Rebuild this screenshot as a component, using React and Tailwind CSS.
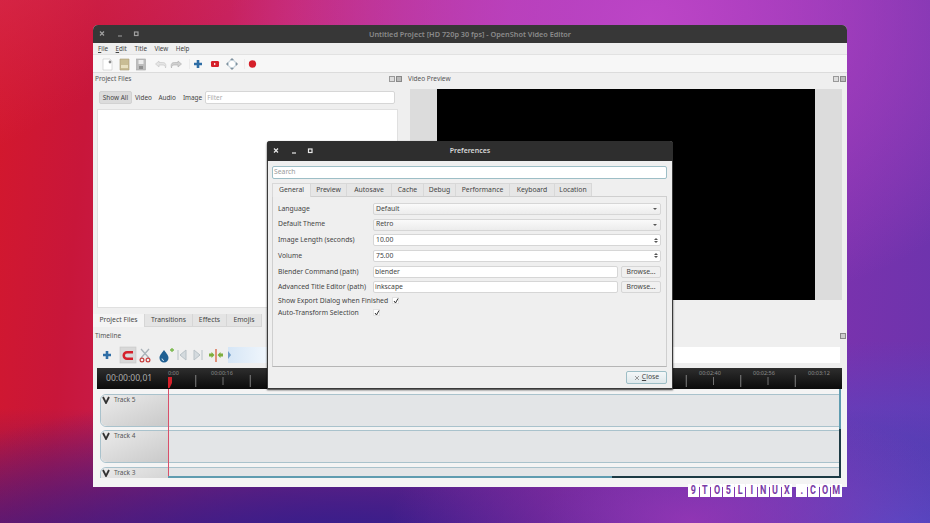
import React from 'react';

const FONT = "font-['Noto_Sans','Open_Sans',sans-serif]";

const PREF_TABS = [
  { label: 'General', w: 'w-[39px]', active: true },
  { label: 'Preview', w: 'w-[36px]' },
  { label: 'Autosave', w: 'w-[45px]' },
  { label: 'Cache', w: 'w-[32px]' },
  { label: 'Debug', w: 'w-[32px]' },
  { label: 'Performance', w: 'w-[54px]' },
  { label: 'Keyboard', w: 'w-[45px]' },
  { label: 'Location', w: 'w-[37px]' },
];

const BOTTOM_TABS = [
  { label: 'Project Files', w: 'w-[52px]', active: true },
  { label: 'Transitions', w: 'w-[48px]' },
  { label: 'Effects', w: 'w-[34px]' },
  { label: 'Emojis', w: 'w-[35px]' },
];

const WATERMARK = ['9', 'T', 'O', '5', 'L', 'I', 'N', 'U', 'X', '.', 'C', 'O', 'M'];

// Window buttons, the same three in both title bars
function WindowButtons({ color }) {
  return (
    <svg width="48" height="8" viewBox="0 0 48 8" fill="none" stroke={color} strokeWidth="1.2">
      <path d="M1 1.5l4 4M5 1.5l-4 4" />
      <path d="M19 6h4" />
      <rect x="35.5" y="2" width="3.5" height="3.5" />
    </svg>
  );
}

function DockButtons() {
  return (
    <div className="flex gap-px">
      <span className="block w-[6px] h-[6px] border border-[#999] bg-[#ddd]" />
      <span className="block w-[6px] h-[6px] border border-[#888] bg-[#bbb]" />
    </div>
  );
}

function ToolbarIcons() {
  return (
    <svg width="160" height="16" viewBox="0 0 160 16" className="ml-[9px]">
      {/* new */}
      <path d="M1 3h7l2 2v9H1z" fill="#fff" stroke="#c8c8c8" strokeWidth=".6" />
      <circle cx="8" cy="6" r="1.4" fill="#8a8a8a" />
      {/* open */}
      <path d="M18 3h9v11h-9z" fill="#c9bd94" stroke="#a89c75" strokeWidth=".6" />
      <path d="M19 9h7v3h-7z" fill="#e8e0c0" />
      {/* save */}
      <g transform="translate(-1.5 0)">
        <rect x="36" y="3" width="9" height="11" fill="#bdbdbd" stroke="#a5a5a5" strokeWidth=".6" />
        <rect x="38" y="4" width="5" height="4" fill="#ececec" />
        <rect x="38.5" y="10" width="4" height="3" fill="#8f8f8f" />
      </g>
      {/* undo / redo */}
      <path d="M57 5l-3.5 3 3.5 3V9h4c1.5 0 2.5 1 2.5 3 1-3.5 0-5.5-3-5.5h-3.5z" fill="#e4e4e4" stroke="#c4c4c4" strokeWidth=".6" />
      <path d="M76 5l3.5 3-3.5 3V9h-4c-1.5 0-2.5 1-2.5 3-1-3.5 0-5.5 3-5.5h3.5z" fill="#d0d0d0" stroke="#adadad" strokeWidth=".6" />
      <path d="M87.5 3v10" stroke="#e2e2e2" strokeWidth=".6" />
      {/* add track */}
      <path d="M92 8h8M96 4v8" stroke="#2f6ea6" strokeWidth="2.6" />
      {/* youtube style clip */}
      <g transform="translate(2 0)">
        <rect x="107" y="5" width="8" height="6" rx="1.2" fill="#d5202a" />
        <path d="M110 6.8l2 1.2-2 1.2z" fill="#fff" />
      </g>
      {/* fullscreen arrows */}
      <g transform="translate(3 0)">
        <path d="M127 2l2 2h-4zM127 14l-2-2h4zM121 8l2-2v4zM133 8l-2-2v4z" fill="#7d8f9c" />
        <circle cx="127" cy="8" r="3.8" fill="#fff" stroke="#9db3c2" strokeWidth=".7" />
      </g>
      <path d="M142.5 3v10" stroke="#e2e2e2" strokeWidth=".6" />
      {/* record */}
      <circle cx="150.5" cy="8" r="3.7" fill="#d5202a" />
    </svg>
  );
}

function TimelineIcons() {
  return (
    <svg width="128" height="18" viewBox="0 0 128 18">
      <path d="M6 9h8M10 5v8" stroke="#2f6ea6" strokeWidth="2.6" />
      {/* magnet, toggled on */}
      <g transform="translate(3 0)">
        <rect x="20" y="1" width="16" height="16" fill="#d8d8d8" stroke="#c6c6c6" strokeWidth=".6" />
        <path d="M33 5h-6a4.5 4.5 0 0 0 0 9h6v-2.5h-6a2 2 0 0 1 0-4h6z" fill="#d5202a" />
      </g>
      {/* razor */}
      <g transform="translate(5 0)">
        <path d="M39 3l8 9M47 3l-8 9" stroke="#a9b2b8" strokeWidth="1.3" />
        <circle cx="40" cy="14" r="1.9" fill="none" stroke="#c9403f" strokeWidth="1.2" />
        <circle cx="46" cy="14" r="1.9" fill="none" stroke="#c9403f" strokeWidth="1.2" />
      </g>
      {/* add marker */}
      <g transform="translate(5 0)">
        <path d="M62 4c3 4 4.5 5.5 4.5 8a4.5 4.5 0 0 1-9 0c0-2.5 1.5-4 4.500-8z" fill="#1f5f92" />
        <path d="M60 12.5a2 2 0 0 0 2 2" stroke="#cfe3f2" fill="none" />
        <path d="M68 4h4M70 2v4" stroke="#78b84a" strokeWidth="1.3" />
      </g>
      {/* previous / next marker */}
      <g transform="translate(2 0)">
        <path d="M79 4v10M87 4l-6 5 6 5z" fill="#d4dade" stroke="#b9c2c7" />
      </g>
      <g transform="translate(3 0)">
        <path d="M102 4v10M94 4l6 5-6 5z" fill="#d4dade" stroke="#b9c2c7" />
      </g>
      {/* center on playhead */}
      <g transform="translate(4 0)">
        <path d="M115 3v13" stroke="#d5502a" strokeWidth="1.2" />
        <path d="M108 7.5v3h2.5V12l3-3-3-3v1.5zM122 7.5v3h-2.5V12l-3-3 3-3v1.5z" fill="#7fae3c" />
      </g>
    </svg>
  );
}

// Ruler ticks and the playhead cap
function RulerTicks() {
  const ticks = [];
  for (let i = 1; i < 25; i++) {
    const x = 71.5 + (i - 1) * 27.25;
    ticks.push(<path key={i} d={`M${x} ${i % 2 === 0 ? 7 : 9}V${i % 2 === 0 ? 19 : 17}`} stroke={i % 2 === 0 ? '#9a9a9a' : '#8a8a8a'} strokeWidth="0.8" />);
  }
  return (
    <svg width="745" height="21" viewBox="0 0 745 21" className="absolute left-0 top-0">
      {ticks}
      <path d="M71 9h4v6l-2.5 5h-1.5z" fill="#d5202a" />
    </svg>
  );
}

function Track({ name, className }) {
  return (
    <div className={`flex ml-[7px] mr-[7px] shrink-0 border border-[#a9c2cc] rounded-tl-md rounded-bl-md ${className}`}>
      <div className="w-[68px] shrink-0 rounded-tl-md rounded-bl-md bg-gradient-to-br from-[#ebebeb] to-[#c9c9c9] flex items-start gap-[4px] pl-[1px]">
        <svg width="8" height="8" viewBox="0 0 8 8" className="mt-[1px]">
          <path d="M1 1l3 6 3-6" fill="none" stroke="#333" strokeWidth="1.8" />
        </svg>
        <span className="text-[6.5px] leading-[9px] text-[#555]">{name}</span>
      </div>
      <div className="flex-1 bg-[#e3e5e7]" />
    </div>
  );
}

function Row({ label, children, tall }) {
  return (
    <div className={`flex items-center ${tall ? 'h-[15.7px]' : 'h-[12.5px]'}`}>
      <div className="w-[95px] shrink-0 text-[6.8px] text-[#444] whitespace-nowrap">{label}</div>
      {children}
    </div>
  );
}

function Combo({ value }) {
  return (
    <div className="flex-1 h-[12px] flex items-center justify-between px-[2px] border border-[#d6d6d6] rounded-[2px] bg-gradient-to-b from-[#fafafa] to-[#ececec] text-[6.8px] text-[#444]">
      <span>{value}</span>
      <span className="w-0 h-0 border-x-[2px] border-x-transparent border-t-[2.5px] border-t-[#555] mr-[1px]" />
    </div>
  );
}

function Spin({ value }) {
  return (
    <div className="flex-1 h-[12px] flex items-center justify-between px-[2px] border border-[#d6d6d6] rounded-[2px] bg-white text-[6.8px] text-[#444]">
      <span>{value}</span>
      <span className="flex flex-col gap-px mr-[0.5px]">
        <span className="w-0 h-0 border-x-[2px] border-x-transparent border-b-[2.5px] border-b-[#555]" />
        <span className="w-0 h-0 border-x-[2px] border-x-transparent border-t-[2.5px] border-t-[#555]" />
      </span>
    </div>
  );
}

function PathField({ value }) {
  return (
    <>
      <div className="w-[245px] h-[12px] flex items-center px-[1px] border border-[#d6d6d6] rounded-[2px] bg-white text-[6.8px] text-[#444]">{value}</div>
      <div className="ml-[3px] w-[40px] h-[12px] flex items-center justify-center border border-[#d6d6d6] rounded-[2px] bg-[#f0f0f0] text-[6.8px] text-[#444]">Browse...</div>
    </>
  );
}

function Check() {
  return (
    <span className="w-[7px] h-[7px] flex items-center justify-center bg-white border border-[#e2e2e2]">
      <svg width="6" height="6" viewBox="0 0 6 6" className="shrink-0">
        <path d="M1 3l1.5 2L5 .5" fill="none" stroke="#333" strokeWidth="1" />
      </svg>
    </span>
  );
}

function PreferencesDialog() {
  return (
    <div className="absolute left-[267px] top-[141px] w-[406px] h-[248px] rounded-t-[3px] bg-[#efefef] flex flex-col shadow-[0_1px_2px_rgba(0,0,0,0.8)] border-x border-b border-[#3a3a3a]">
      <div className="relative h-[20px] shrink-0 -mx-px rounded-t-[3px] bg-[#2e2e2e] flex items-center justify-center">
        <div className="absolute left-[6px] top-[6px]">
          <WindowButtons color="#e8e8e8" />
        </div>
        <span className="text-[7px] font-semibold text-[#d8d8d8]">Preferences</span>
      </div>

      <div className="flex-1 flex flex-col pl-[4px] pr-[5px] pt-[5px]">
        <div className="h-[13px] shrink-0 flex items-center px-[1px] border border-[#9dbec6] rounded-[2px] bg-white text-[6.8px] text-[#9a9a9a]">Search</div>

        <div className="flex mt-[4px] h-[13px] shrink-0 relative z-10">
          {PREF_TABS.map(tab => (
            <div
              key={tab.label}
              className={`${tab.w} flex items-center justify-center text-[6.8px] text-[#444] border-t border-r border-[#d8d8d8] ${tab.active ? 'bg-[#f0f0f0] border-l h-[14px]' : 'bg-[#e6e6e6]'}`}
            >
              {tab.label}
            </div>
          ))}
        </div>

        <div className="h-[171px] shrink-0 border border-[#cfcfcf] border-b-[#b5b5b5] flex flex-col px-[5px] pt-[4px]">
          <Row label="Language" tall><Combo value="Default" /></Row>
          <Row label="Default Theme" tall><Combo value="Retro" /></Row>
          <Row label="Image Length (seconds)" tall><Spin value="10.00" /></Row>
          <Row label="Volume" tall><Spin value="75.00" /></Row>
          <Row label="Blender Command (path)" tall><PathField value="blender" /></Row>
          <Row label="Advanced Title Editor (path)" tall><PathField value="inkscape" /></Row>
          <div className="flex items-center gap-[4px] h-[11.5px] text-[6.8px] text-[#444] whitespace-nowrap">
            Show Export Dialog when Finished <Check />
          </div>
          <Row label="Auto-Transform Selection"><Check /></Row>
        </div>

        <div className="flex justify-end mt-[4px]">
          <div className="w-[41px] h-[13px] flex items-center justify-center gap-[2px] border border-[#9dbec6] rounded-[2px] bg-gradient-to-b from-[#f4f7f8] to-[#dfe8eb] text-[6.8px] text-[#444]">
            <svg width="6" height="6" viewBox="0 0 6 6"><path d="M1 1l4 4M5 1L1 5" stroke="#999" strokeWidth="1" /></svg>
            <span><span className="underline">C</span>lose</span>
          </div>
        </div>
      </div>
    </div>
  );
}

function MainWindow() {
  return (
    <div className="absolute left-[93px] top-[25px] w-[754px] h-[462px] rounded-t-[5px] bg-[#efefef] flex flex-col overflow-hidden">
      <div className="relative h-[18px] shrink-0 bg-[#373737] flex items-center justify-center">
        <div className="absolute left-[6px] top-[5px]">
          <WindowButtons color="#a0a0a0" />
        </div>
        <span className="text-[7.3px] font-semibold text-[#8b8b8b]">Untitled Project [HD 720p 30 fps] - OpenShot Video Editor</span>
      </div>

      <div className="h-[12px] shrink-0 flex items-center gap-[7.5px] pl-[5px] text-[6.3px] text-[#444] bg-[#efefef] border-b border-[#e2e2e2]">
        <span><span className="underline">F</span>ile</span>
        <span><span className="underline">E</span>dit</span>
        <span>Title</span>
        <span>View</span>
        <span>Help</span>
      </div>

      <div className="h-[18px] shrink-0 flex items-center bg-[#f7f7f7] border-b border-[#dcdcdc]">
        <ToolbarIcons />
      </div>

      <div className="flex h-[257px] shrink-0">
        {/* Project files */}
        <div className="w-[310px] shrink-0 flex flex-col">
          <div className="h-[12px] flex items-center justify-between pl-[2px] pr-[1px] text-[6.5px] text-[#555]">
            Project Files
            <DockButtons />
          </div>
          <div className="flex items-center mt-[6px] h-[13px] pl-[6px] text-[6.4px] text-[#444]">
            <div className="w-[33px] h-[13px] flex items-center justify-center bg-[#dcdcdc] border border-[#d2d2d2] rounded-[2px]">Show All</div>
            <span className="ml-[3px]">Video</span>
            <span className="ml-[6.5px]">Audio</span>
            <span className="ml-[7px]">Image</span>
            <div className="ml-[3px] w-[190px] h-[13px] flex items-center px-[1px] border border-[#d6d6d6] rounded-[2px] bg-white text-[#aaa]">Filter</div>
          </div>
          <div className="ml-[4px] mr-[5px] mt-[5px] h-[199px] bg-white border border-[#e0e0e0]" />
          <div className="flex mt-[6px] h-[13px] text-[6.8px] text-[#444]">
            {BOTTOM_TABS.map(tab => (
              <div
                key={tab.label}
                className={`${tab.w} flex items-center justify-center border-b border-r border-[#d6d6d6] ${tab.active ? 'bg-[#f4f4f4] border-b-0' : 'bg-[#e4e4e4]'}`}
              >
                {tab.label}
              </div>
            ))}
          </div>
        </div>

        {/* Video preview */}
        <div className="flex-1 flex flex-col pl-[2px] pb-[30px]">
          <div className="h-[12px] flex items-center justify-between pl-[3px] pr-[1px] text-[6.5px] text-[#555]">
            Video Preview
            <DockButtons />
          </div>
          <div className="flex-1 mt-[4px] ml-[5px] mr-[5px] bg-[#dcdcdc] flex justify-center">
            <div className="w-[378px] ml-[-1px] bg-black" />
          </div>
        </div>
      </div>

      {/* Timeline */}
      <div className="flex-1 flex flex-col min-h-0">
        <div className="h-[11px] pt-px shrink-0 flex items-center justify-between pl-[2px] pr-[1px] text-[6.5px] text-[#555]">
          Timeline
          <span className="block w-[6px] h-[6px] border border-[#888] bg-[#ccc]" />
        </div>
        <div className="h-[22px] mt-[3px] shrink-0 flex items-center pl-[4px]">
          <TimelineIcons />
          <div className="relative ml-[3px] mr-[7px] flex-1 h-[16px] bg-gradient-to-r from-[#d6e6f6] to-white to-[10%]">
            <span className="absolute left-0 top-[4px] w-0 h-0 border-y-[4px] border-y-transparent border-l-[3px] border-l-[#6f9cc8]" />
          </div>
        </div>
        <div className="relative h-[21px] mt-[2px] shrink-0 ml-[4px] mr-[5px] bg-gradient-to-b from-[#2e2e2e] to-[#0c0c0c] text-[#8d8d8d] text-[5.5px]">
          <RulerTicks />
          <span className="absolute left-[9px] top-[5px] text-[8.6px] leading-[11px] text-[#aaaaaa]">00:00:00,01</span>
          <span className="absolute left-[71px] top-[1px]">0:00</span>
          <span className="absolute left-[114px] top-[1px]">00:00:16</span>
          <span className="absolute left-[602px] top-[1px]">00:02:40</span>
          <span className="absolute left-[656px] top-[1px]">00:02:56</span>
          <span className="absolute left-[711px] top-[1px]">00:03:12</span>
        </div>
        <div className="relative flex-1 min-h-0 overflow-hidden bg-[#f4f4f4] pt-[5px] flex flex-col gap-[3px]">
          <Track name="Track 5" className="h-[33px]" />
          <Track name="Track 4" className="h-[33px]" />
          <Track name="Track 3" className="h-[33px] mt-[1px]" />
          {/* scroll bars and playhead lie over the tracks */}
          <span className="absolute left-[75px] top-0 bottom-[9px] w-px bg-[#d8506a]" />
          <span className="absolute left-[75px] right-[7px] bottom-[9px] h-[2px] bg-[#1c3a44]" />
          <span className="absolute left-[75px] w-[444px] bottom-[9px] h-[2px] bg-[#5f9cb0]" />
          <span className="absolute right-[6px] top-0 h-[40px] w-[2px] bg-[#5f9cb0]" />
          <span className="absolute right-[6px] top-[40px] bottom-[9px] w-[2px] bg-[#1c3a44]" />
          <span className="absolute left-0 right-0 bottom-0 h-[9px] bg-[#f4f4f4]" />
        </div>
      </div>
    </div>
  );
}

export default function App() {
  return (
    <div className={`relative w-[930px] h-[523px] overflow-hidden ${FONT} bg-[radial-gradient(ellipse_420px_300px_at_650px_20px,rgba(190,70,200,0.95),transparent),radial-gradient(ellipse_300px_120px_at_690px_520px,rgba(160,55,185,0.8),transparent),radial-gradient(ellipse_360px_200px_at_900px_540px,rgba(70,80,205,0.95),transparent),radial-gradient(ellipse_520px_170px_at_340px_560px,rgba(55,30,140,0.95)_20%,transparent),linear-gradient(to_top,rgba(90,20,110,0.75),transparent_22%),linear-gradient(150deg,rgba(215,50,95,0.45),transparent_14%),linear-gradient(96deg,#d4182c_0%,#c8163a_10%,#c82870_30%,#b236a6_52%,#8a30ae_75%,#6b34ad_100%)]`}>
      <MainWindow />
      <PreferencesDialog />
      <div className="absolute left-[688px] top-[484px] flex gap-px font-['Roboto',sans-serif] font-bold text-[12px] leading-[13px] text-[#7a3ca8]">
        {WATERMARK.map((ch, i) => (
          <span key={i} className={`h-[13px] w-[10.7px] bg-white flex items-center justify-center ${ch === '.' ? 'ml-[3px]' : ''}`}>
            <span className="scale-x-75">{ch}</span>
          </span>
        ))}
      </div>
    </div>
  );
}
